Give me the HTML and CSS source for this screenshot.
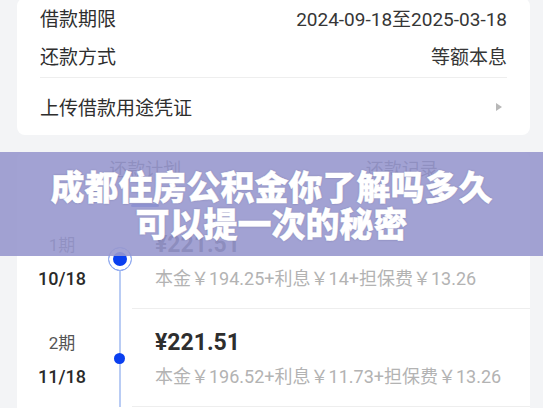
FILE: index.html
```html
<!DOCTYPE html>
<html lang="zh-CN">
<head>
<meta charset="utf-8">
<title>还款计划</title>
<link rel="stylesheet" href="styles.css">
</head>
<body>
<div class="page">
  <section class="card info">
    <div class="row"><span class="label">借款期限</span><span class="value">2024-09-18至2025-03-18</span></div>
    <div class="row"><span class="label">还款方式</span><span class="value">等额本息</span></div>
    <div class="divider"></div>
    <div class="row link"><span class="label">上传借款用途凭证</span><span class="arrow"></span></div>
  </section>

  <section class="card plan">
    <div class="tabs">
      <div class="tab active">还款计划</div>
      <div class="tab">还款记录</div>
    </div>
    <div class="item first">
      <div class="when"><div class="period">1期</div><div class="date">10/18</div></div>
      <div class="axis"><span class="dot big"></span></div>
      <div class="detail">
        <div class="amount">¥221.51</div>
        <div class="breakdown">本金￥194.25+利息￥14+担保费￥13.26</div>
      </div>
    </div>
    <div class="item">
      <div class="when"><div class="period">2期</div><div class="date">11/18</div></div>
      <div class="axis"><span class="dot"></span></div>
      <div class="detail">
        <div class="amount">¥221.51</div>
        <div class="breakdown">本金￥196.52+利息￥11.73+担保费￥13.26</div>
      </div>
    </div>
  </section>

  <div class="banner">
    <h1 class="banner-title">成都住房公积金你了解吗多久<br>可以提一次的秘密</h1>
  </div>
</div>
</body>
</html>
```

FILE: styles.css
```css
html, body {
  margin: 0;
  padding: 0;
}
body {
  background: #f3f4f6;
  font-family: "Roboto", "Noto Sans CJK SC", sans-serif;
  overflow: hidden;
}
.page {
  position: relative;
  height: 408px;
  overflow: hidden;
}
.card {
  background: #fff;
  border-radius: 8px;
  margin-left: 17px;
  margin-right: 13px;
}
.info {
  margin-top: -2px;
  padding: 0 23px;
}
.row {
  height: 38px;
  display: flex;
  align-items: center;
  justify-content: space-between;
  font-size: 19px;
  color: #2e2e2e;
}
.value {
  color: #363636;
}
.divider {
  height: 1px;
  background: #eeeeee;
  margin-top: 3px;
}
.row.link {
  height: 57px;
}
.arrow {
  width: 0;
  height: 0;
  border-left: 6px solid #b8b8b8;
  border-top: 4px solid transparent;
  border-bottom: 4px solid transparent;
  margin-right: 5px;
}

.plan {
  margin-top: 17px;
  height: 320px;
}
.tabs {
  display: grid;
  grid-template-columns: 1fr 1fr;
  height: 59px;
}
.tab {
  display: flex;
  flex-direction: column;
  align-items: center;
  padding-top: 6px;
  font-size: 18px;
  line-height: 24px;
  color: #444;
}
.tab.active::after {
  content: "";
  width: 28px;
  height: 3px;
  border-radius: 2px;
  background: #3b5ce6;
  margin-top: 22px;
}

.item {
  display: grid;
  grid-template-columns: 90px 25px 1fr;
  height: 98px;
}
.when {
  display: flex;
  flex-direction: column;
  align-items: center;
  padding-top: 19px;
}
.period {
  font-size: 17px;
  line-height: 30px;
  color: #555;
}
.date {
  margin-top: 6px;
  font-size: 18px;
  line-height: 26px;
  font-weight: 500;
  color: #2a2a2a;
}
.axis {
  position: relative;
  display: flex;
  justify-content: center;
  align-items: flex-start;
}
.axis::before {
  content: "";
  position: absolute;
  left: 11.5px;
  top: 0;
  bottom: 0;
  width: 2px;
  background: #b9ccf4;
}
.item.first .axis::before {
  top: 48px;
}
.dot {
  position: relative;
  width: 11px;
  height: 11px;
  border-radius: 50%;
  background: #0a3ff0;
  margin-top: 44px;
}
.dot.big {
  box-sizing: border-box;
  width: 24px;
  height: 24px;
  margin-top: 36px;
  background: #0a3ff0;
  border: 1.5px solid #9fb6ee;
  box-shadow: inset 0 0 0 4px #ffffff;
}
.detail {
  padding-left: 23px;
  padding-top: 19px;
  border-bottom: 1px solid #eeeeee;
}
.amount {
  font-size: 23px;
  line-height: 30px;
  font-weight: 700;
  color: #2e2e2e;
}
.breakdown {
  margin-top: 6px;
  font-size: 18px;
  line-height: 26px;
  color: #b3b3b3;
}

.banner {
  position: absolute;
  left: 0;
  right: 0;
  top: 152px;
  height: 104px;
  background: rgba(152, 152, 206, 0.9);
  display: flex;
  align-items: center;
  justify-content: center;
}
.banner-title {
  margin: 0;
  font-family: "Noto Sans CJK SC", sans-serif;
  font-size: 34px;
  line-height: 37px;
  font-weight: 900;
  color: #ffffff;
  text-align: center;
  -webkit-text-stroke: 0.4px #ffffff;
  text-shadow: 0 0 2px rgba(60, 60, 100, 0.4);
}
```
